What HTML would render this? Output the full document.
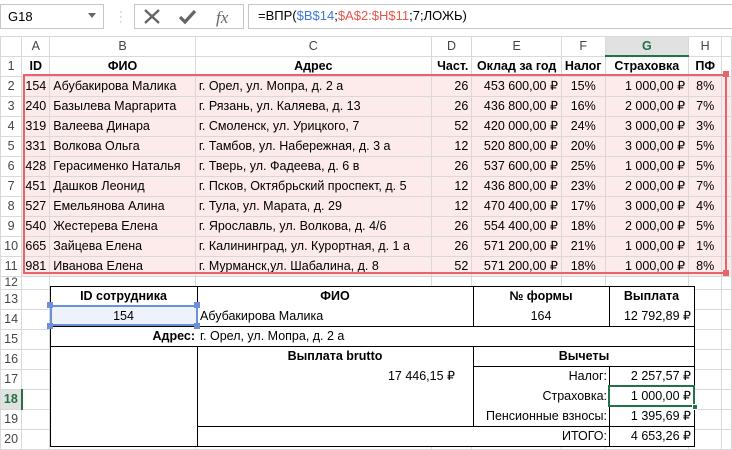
<!DOCTYPE html>
<html><head><meta charset="utf-8">
<style>
*{margin:0;padding:0;box-sizing:border-box}
body{width:732px;height:448px;overflow:hidden;background:#fff;font-family:"Liberation Sans",sans-serif;font-size:12.5px;color:#000;position:relative}
.abs{position:absolute}
table{position:absolute;left:0;top:36px;border-collapse:collapse;table-layout:fixed}
td{border:1px solid #d9d9d9;height:20px;padding:0 3px;white-space:nowrap;overflow:hidden;line-height:18px}
tr.h td{height:19px;text-align:center;color:#444;font-size:12.5px}
tr.s td{height:13px;line-height:11px;font-size:12px;vertical-align:top}
td.rh{text-align:center;color:#444;padding:0}
.r{text-align:right}.c{text-align:center}.b{font-weight:bold}
tr.p td:not(.rh){background:#fdeaea}
.f{position:absolute;background:#fff;border:1px solid #000}
.t{position:absolute;white-space:nowrap;line-height:20px;height:20px}
</style></head><body>
<div class="abs" style="left:0;top:4px;width:104px;height:25px;border:1px solid #c6c6c6"></div>
<div class="abs" style="left:8px;top:9px;font-size:13px">G18</div>
<div class="abs" style="left:88px;top:13px;width:0;height:0;border-left:4px solid transparent;border-right:4px solid transparent;border-top:5px solid #666"></div>
<div class="abs" style="left:119px;top:10px;color:#aaa;font-size:11px;line-height:5px">·<br>·<br>·</div>
<div class="abs" style="left:134px;top:4px;width:110px;height:25px;border:1px solid #c6c6c6"></div>
<svg class="abs" style="left:134px;top:4px" width="110" height="25">
<path d="M11 6 L25 19 M25 6 L11 19" stroke="#666" stroke-width="2.4"/>
<path d="M46 13 L51 18 L61 7" stroke="#666" stroke-width="3.2" fill="none"/>
<text x="82" y="19" font-family="Liberation Serif" font-style="italic" font-size="17" fill="#666">fx</text>
</svg>
<div class="abs" style="left:248px;top:4px;width:490px;height:25px;border:1px solid #c6c6c6"></div>
<div class="abs" style="left:258px;top:8px;font-size:13px">=ВПР(<span style="color:#3b78d8">$B$14</span>;<span style="color:#e8564a">$A$2:$H$11</span>;7;ЛОЖЬ)</div>

<table>
<colgroup><col style="width:22px"><col style="width:28px"><col style="width:147px"><col style="width:238px"><col style="width:41px"><col style="width:90px"><col style="width:43px"><col style="width:85px"><col style="width:34px"><col style="width:10px"></colgroup>
<tr class="h"><td style="background:#fff"></td><td>A</td><td>B</td><td>C</td><td>D</td><td>E</td><td>F</td><td style="background:#e1e1e1;color:#217346;font-weight:bold;border-bottom:2px solid #217346">G</td><td>H</td><td></td></tr>
<tr><td class="rh">1</td><td class="c b">ID</td><td class="c b">ФИО</td><td class="c b">Адрес</td><td class="r b">Част.</td><td class="c b">Оклад за год</td><td class="c b">Налог</td><td class="c b">Страховка</td><td class="c b">ПФ</td><td></td></tr>
<tr class="p"><td class="rh">2</td><td class="r">154</td><td>Абубакирова Малика</td><td>г. Орел, ул. Мопра, д. 2 а</td><td class="r">26</td><td class="r">453 600,00 ₽</td><td class="c">15%</td><td class="r">1 000,00 ₽</td><td class="c">8%</td><td></td></tr>
<tr class="p"><td class="rh">3</td><td class="r">240</td><td>Базылева Маргарита</td><td>г. Рязань, ул. Каляева, д. 13</td><td class="r">26</td><td class="r">436 800,00 ₽</td><td class="c">16%</td><td class="r">2 000,00 ₽</td><td class="c">7%</td><td></td></tr>
<tr class="p"><td class="rh">4</td><td class="r">319</td><td>Валеева Динара</td><td>г. Смоленск, ул. Урицкого, 7</td><td class="r">52</td><td class="r">420 000,00 ₽</td><td class="c">24%</td><td class="r">3 000,00 ₽</td><td class="c">3%</td><td></td></tr>
<tr class="p"><td class="rh">5</td><td class="r">331</td><td>Волкова Ольга</td><td>г. Тамбов, ул. Набережная, д. 3 а</td><td class="r">12</td><td class="r">520 800,00 ₽</td><td class="c">20%</td><td class="r">3 000,00 ₽</td><td class="c">5%</td><td></td></tr>
<tr class="p"><td class="rh">6</td><td class="r">428</td><td>Герасименко Наталья</td><td>г. Тверь, ул. Фадеева, д. 6 в</td><td class="r">26</td><td class="r">537 600,00 ₽</td><td class="c">25%</td><td class="r">1 000,00 ₽</td><td class="c">5%</td><td></td></tr>
<tr class="p"><td class="rh">7</td><td class="r">451</td><td>Дашков Леонид</td><td>г. Псков, Октябрьский проспект, д. 5</td><td class="r">12</td><td class="r">436 800,00 ₽</td><td class="c">23%</td><td class="r">2 000,00 ₽</td><td class="c">7%</td><td></td></tr>
<tr class="p"><td class="rh">8</td><td class="r">527</td><td>Емельянова Алина</td><td>г. Тула, ул. Марата, д. 29</td><td class="r">12</td><td class="r">470 400,00 ₽</td><td class="c">17%</td><td class="r">3 000,00 ₽</td><td class="c">4%</td><td></td></tr>
<tr class="p"><td class="rh">9</td><td class="r">540</td><td>Жестерева Елена</td><td>г. Ярославль, ул. Волкова, д. 4/6</td><td class="r">26</td><td class="r">554 400,00 ₽</td><td class="c">18%</td><td class="r">2 000,00 ₽</td><td class="c">5%</td><td></td></tr>
<tr class="p"><td class="rh">10</td><td class="r">665</td><td>Зайцева Елена</td><td>г. Калининград, ул. Курортная, д. 1 а</td><td class="r">26</td><td class="r">571 200,00 ₽</td><td class="c">21%</td><td class="r">1 000,00 ₽</td><td class="c">1%</td><td></td></tr>
<tr class="p"><td class="rh">11</td><td class="r">981</td><td>Иванова Елена</td><td>г. Мурманск,ул. Шабалина, д. 8</td><td class="r">52</td><td class="r">571 200,00 ₽</td><td class="c">18%</td><td class="r">1 000,00 ₽</td><td class="c">8%</td><td></td></tr>
<tr class="s"><td class="rh">12</td><td></td><td></td><td></td><td></td><td></td><td></td><td></td><td></td><td></td></tr>
<tr><td class="rh">13</td><td></td><td></td><td></td><td></td><td></td><td></td><td></td><td></td><td></td></tr>
<tr><td class="rh">14</td><td></td><td></td><td></td><td></td><td></td><td></td><td></td><td></td><td></td></tr>
<tr><td class="rh">15</td><td></td><td></td><td></td><td></td><td></td><td></td><td></td><td></td><td></td></tr>
<tr><td class="rh">16</td><td></td><td></td><td></td><td></td><td></td><td></td><td></td><td></td><td></td></tr>
<tr><td class="rh">17</td><td></td><td></td><td></td><td></td><td></td><td></td><td></td><td></td><td></td></tr>
<tr><td class="rh" style="background:#e1e1e1;color:#217346;font-weight:bold;border-right:2px solid #217346">18</td><td></td><td></td><td></td><td></td><td></td><td></td><td></td><td></td><td></td></tr>
<tr><td class="rh">19</td><td></td><td></td><td></td><td></td><td></td><td></td><td></td><td></td><td></td></tr>
<tr><td class="rh">20</td><td></td><td></td><td></td><td></td><td></td><td></td><td></td><td></td><td></td></tr>
</table>
<div class="abs" style="left:23px;top:74px;width:704px;height:200px;border:2px solid #e8646a"></div>
<div class="abs" style="left:723px;top:71px;width:6px;height:6px;background:#e8646a"></div>
<div class="abs" style="left:723px;top:270px;width:6px;height:6px;background:#e8646a"></div>

<div class="f" style="left:50px;top:286px;width:645px;height:161px;border-width:1px"></div>
<div class="abs" style="left:197px;top:286px;width:1px;height:40px;background:#000"></div>
<div class="abs" style="left:473px;top:286px;width:1px;height:40px;background:#000"></div>
<div class="abs" style="left:609px;top:286px;width:1px;height:40px;background:#000"></div>
<div class="abs" style="left:50px;top:326px;width:645px;height:1px;background:#000"></div>
<div class="abs" style="left:50px;top:346px;width:645px;height:1px;background:#000"></div>
<div class="abs" style="left:197px;top:346px;width:1px;height:101px;background:#000"></div>
<div class="abs" style="left:473px;top:346px;width:1px;height:80px;background:#000"></div>
<div class="abs" style="left:473px;top:366px;width:222px;height:1px;background:#000"></div>
<div class="abs" style="left:609px;top:366px;width:1px;height:81px;background:#000"></div>
<div class="abs" style="left:197px;top:426px;width:498px;height:1px;background:#000"></div>
<div class="abs" style="left:50px;top:305px;width:148px;height:21px;background:#eef2fb;border:2px solid #6a8fdb"></div>
<div class="abs" style="left:47px;top:302px;width:6px;height:6px;background:#6a8fdb"></div>
<div class="abs" style="left:194px;top:302px;width:6px;height:6px;background:#6a8fdb"></div>
<div class="abs" style="left:47px;top:323px;width:6px;height:6px;background:#6a8fdb"></div>
<div class="abs" style="left:194px;top:323px;width:6px;height:6px;background:#6a8fdb"></div>

<div class="t b" style="left:50px;top:286px;width:147px;text-align:center">ID сотрудника</div>
<div class="t" style="left:50px;top:306px;width:147px;text-align:center">154</div>
<div class="t b" style="left:197px;top:286px;width:276px;text-align:center">ФИО</div>
<div class="t" style="left:200px;top:306px">Абубакирова Малика</div>
<div class="t b" style="left:473px;top:286px;width:136px;text-align:center">№ формы</div>
<div class="t" style="left:473px;top:306px;width:136px;text-align:center">164</div>
<div class="t b" style="left:609px;top:286px;width:85px;text-align:center">Выплата</div>
<div class="t" style="left:609px;top:306px;width:82px;text-align:right">12 792,89 ₽</div>
<div class="t b" style="left:50px;top:326px;width:145px;text-align:right">Адрес:</div>
<div class="t" style="left:200px;top:326px">г. Орел, ул. Мопра, д. 2 а</div>
<div class="t b" style="left:197px;top:346px;width:276px;text-align:center">Выплата brutto</div>
<div class="t" style="left:197px;top:366px;width:258px;text-align:right">17 446,15 ₽</div>
<div class="t b" style="left:473px;top:346px;width:222px;text-align:center">Вычеты</div>
<div class="t" style="left:473px;top:366px;width:134px;text-align:right">Налог:</div>
<div class="t" style="left:609px;top:366px;width:82px;text-align:right">2 257,57 ₽</div>
<div class="t" style="left:473px;top:386px;width:134px;text-align:right">Страховка:</div>
<div class="t" style="left:609px;top:386px;width:82px;text-align:right">1 000,00 ₽</div>
<div class="t" style="left:473px;top:406px;width:134px;text-align:right">Пенсионные взносы:</div>
<div class="t" style="left:609px;top:406px;width:82px;text-align:right">1 395,69 ₽</div>
<div class="t" style="left:473px;top:426px;width:134px;text-align:right">ИТОГО:</div>
<div class="t" style="left:609px;top:426px;width:82px;text-align:right">4 653,26 ₽</div>
<div class="abs" style="left:608px;top:385px;width:87px;height:22px;border:2px solid #217346"></div>
<div class="abs" style="left:692px;top:404px;width:6px;height:6px;background:#217346;border:1px solid #fff"></div>
</body></html>
